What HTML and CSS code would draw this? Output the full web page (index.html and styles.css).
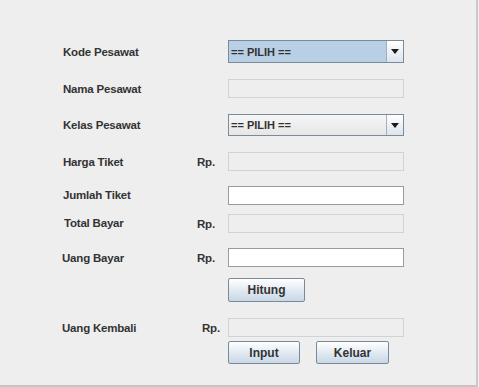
FILE: index.html
```html
<!DOCTYPE html>
<html lang="id">
<head>
    <meta charset="UTF-8">
    <meta name="viewport" content="width=device-width, initial-scale=1.0">
    <title>Tiket Pesawat</title>
    <link rel="stylesheet" href="styles.css">
</head>
<body>
    <div class="frame">
        <form class="form" name="tiket">
            <div class="row row-kode">
                <label class="label">Kode Pesawat</label>
                <span class="rp"></span>
                <div class="combo selected">
                    <span class="combo-text">== PILIH ==</span>
                    <span class="combo-arrow"></span>
                </div>
            </div>
            <div class="row row-nama">
                <label class="label">Nama Pesawat</label>
                <span class="rp"></span>
                <input type="text" class="field disabled" disabled>
            </div>
            <div class="row row-kelas">
                <label class="label">Kelas Pesawat</label>
                <span class="rp"></span>
                <div class="combo">
                    <span class="combo-text">== PILIH ==</span>
                    <span class="combo-arrow"></span>
                </div>
            </div>
            <div class="row row-harga">
                <label class="label">Harga Tiket</label>
                <span class="rp">Rp.</span>
                <input type="text" class="field disabled" disabled>
            </div>
            <div class="row row-jumlah">
                <label class="label">Jumlah Tiket</label>
                <span class="rp"></span>
                <input type="text" class="field">
            </div>
            <div class="row row-total">
                <label class="label">Total Bayar</label>
                <span class="rp">Rp.</span>
                <input type="text" class="field disabled" disabled>
            </div>
            <div class="row row-bayar">
                <label class="label">Uang Bayar</label>
                <span class="rp">Rp.</span>
                <input type="text" class="field">
            </div>
            <div class="row row-hitung">
                <span class="label"></span>
                <span class="rp"></span>
                <div class="actions">
                    <button type="button" class="btn btn-hitung">Hitung</button>
                </div>
            </div>
            <div class="row row-kembali">
                <label class="label">Uang Kembali</label>
                <span class="rp rp-shift">Rp.</span>
                <input type="text" class="field disabled" disabled>
            </div>
            <div class="row row-buttons">
                <span class="label"></span>
                <span class="rp"></span>
                <div class="actions">
                    <button type="button" class="btn btn-input">Input</button>
                    <button type="button" class="btn btn-keluar">Keluar</button>
                </div>
            </div>
        </form>
    </div>
</body>
</html>
```

FILE: styles.css
```css
body{
    margin: 0;
    background-color: #eeeeee;
    font-family: "Liberation Sans", Arial, sans-serif;
}

.frame{
    width: 476px;
    height: 385px;
    border-right: 2px solid #c9c9c9;
    border-bottom: 2px solid #c4c4c4;
    box-sizing: content-box;
}

.form{
    display: flex;
    flex-direction: column;
    padding: 40px 0 0 63px;
}

.row{
    display: grid;
    grid-template-columns: 134px 31px 176px;
    align-items: center;
}

.label, .rp{
    font-size: 11.5px;
    letter-spacing: -0.2px;
    font-weight: bold;
    color: #333333;
}

.rp-shift{
    padding-left: 5px;
}

/* row heights and gaps */
.row-kode{ height: 23px; }
.row-nama{ height: 18px; margin-top: 16px; }
.row-kelas{ height: 22px; margin-top: 17px; }
.row-harga{ height: 17px; margin-top: 16px; }
.row-jumlah{ height: 17px; margin-top: 17px; }
.row-total{ height: 18px; margin-top: 11px; }
.row-bayar{ height: 17px; margin-top: 16px; }
.row-hitung{ height: 24px; margin-top: 13px; }
.row-kembali{ height: 18px; margin-top: 16px; }
.row-buttons{ height: 23px; margin-top: 5px; }

.row-total .label{ padding-left: 1px; padding-bottom: 2px; }
.row-bayar .label, .row-kembali .label{ margin-left: -1px; }
.row-jumlah .label{ padding-bottom: 2px; }

.field{
    width: 176px;
    height: 100%;
    box-sizing: border-box;
    margin: 0;
    border: 1px solid #9a9a9a;
    background-color: #ffffff;
}

.field.disabled{
    border: 1px solid #d2d2d2;
    background-color: #eeeeee;
}

.combo{
    display: flex;
    width: 176px;
    height: 100%;
    box-sizing: border-box;
    border: 1px solid #7a8a99;
    background: linear-gradient(#f6f6f6, #e6e6e6);
}

.combo.selected{
    background: #b8cfe5;
}

.combo-text{
    flex: 1;
    display: flex;
    align-items: center;
    padding-left: 2px;
    font-size: 11px;
    font-weight: bold;
    color: #333333;
}

.combo-arrow{
    width: 16px;
    border-left: 1px solid #a3b1bf;
    background: linear-gradient(#ffffff, #dde4ec);
    display: flex;
    align-items: center;
    justify-content: center;
}

.combo-arrow::after{
    content: "";
    border-left: 4px solid transparent;
    border-right: 4px solid transparent;
    border-top: 5px solid #1a1a1a;
}

.actions{
    display: flex;
    gap: 16px;
    height: 100%;
}

.btn{
    height: 100%;
    padding: 0;
    border: 1px solid #7a8a99;
    border-radius: 2px;
    background: linear-gradient(#ffffff, #dfe8f1 55%, #c9d7e5);
    font-family: "Liberation Sans", Arial, sans-serif;
    font-size: 12px;
    font-weight: bold;
    color: #333333;
    cursor: pointer;
}

.btn-hitung{ width: 77px; }
.btn-input{ width: 72px; }
.btn-keluar{ width: 73px; }
```
